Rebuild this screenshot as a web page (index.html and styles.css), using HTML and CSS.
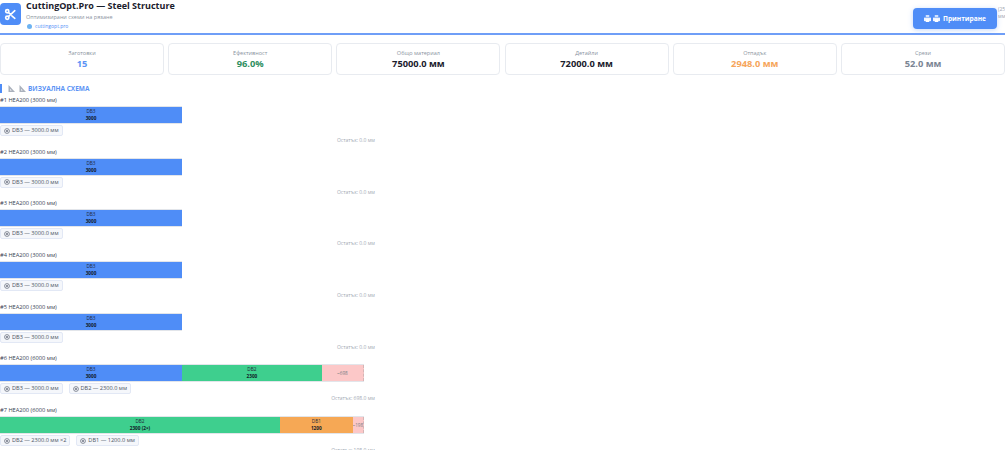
FILE: index.html
```html
<!DOCTYPE html>
<html lang="bg">
<head>
<meta charset="utf-8">
<title>CuttingOpt.Pro</title>
<link rel="stylesheet" href="styles.css">
</head>
<body>
<svg class="defs" width="0" height="0" aria-hidden="true">
  <symbol id="printer" viewBox="0 0 8 8"><path d="M2 0h4v2.5H2z" fill="#cfe0fd"/><path d="M0 3h8v4H0z" fill="#eef4ff"/><path d="M2 5h4v3H2z" fill="#fff"/></symbol>
  <symbol id="ruler" viewBox="0 0 7 7"><path d="M.5 0v7H7z" fill="#aab1bc"/><path d="M2 4v1.6h1.8z" fill="#fff"/></symbol>
  <symbol id="gear" viewBox="0 0 6 6"><circle cx="3" cy="3" r="2.4" fill="none" stroke="#6b7280" stroke-width=".8"/><circle cx="3" cy="3" r="1" fill="#6b7280"/></symbol>
</svg>
<header class="header">
  <div class="brand">
    <div class="logo">
      <svg width="13" height="13" viewBox="0 0 24 24" fill="none" stroke="#fff" stroke-width="3" stroke-linecap="round"><circle cx="6" cy="6" r="3"/><circle cx="6" cy="18" r="3"/><path d="M20 5 8.1 15.9M14.5 14.5 20 19M8.1 8.1 12 12"/></svg>
    </div>
    <div class="brand-text">
      <div class="title">CuttingOpt.Pro — Steel Structure</div>
      <div class="subtitle">Оптимизирани схеми на рязане</div>
      <div class="site"><span class="globe"></span>cuttingopt.pro</div>
    </div>
  </div>
  <div class="actions">
    <button class="print"><svg class="pi"><use href="#printer"/></svg><svg class="pi"><use href="#printer"/></svg>Принтиране</button>
    <div class="meta">(25<br>мм</div>
  </div>
</header>
<section class="stats">
  <div class="card"><div class="lab">Заготовки</div><div class="val blue">15</div></div>
  <div class="card"><div class="lab">Ефективност</div><div class="val green">96.0%</div></div>
  <div class="card"><div class="lab">Общо материал</div><div class="val">75000.0 мм</div></div>
  <div class="card"><div class="lab">Детайли</div><div class="val">72000.0 мм</div></div>
  <div class="card"><div class="lab">Отпадък</div><div class="val orange">2948.0 мм</div></div>
  <div class="card"><div class="lab">Срези</div><div class="val grey">52.0 мм</div></div>
</section>
<h2 class="section"><svg class="tri"><use href="#ruler"/></svg><svg class="tri"><use href="#ruler"/></svg>ВИЗУАЛНА СХЕМА</h2>
<main class="list">
  <article class="row"><div class="name">#1 HEA200 (3000 мм)</div><div class="bar half"><div class="seg db3 w-full">DB3<b>3000</b></div></div><div class="chips"><span class="chip"><svg class="gear"><use href="#gear"/></svg>DB3 — 3000.0 мм</span></div><div class="rest">Остатък: 0.0 мм</div></article>
  <article class="row"><div class="name">#2 HEA200 (3000 мм)</div><div class="bar half"><div class="seg db3 w-full">DB3<b>3000</b></div></div><div class="chips"><span class="chip"><svg class="gear"><use href="#gear"/></svg>DB3 — 3000.0 мм</span></div><div class="rest">Остатък: 0.0 мм</div></article>
  <article class="row"><div class="name">#3 HEA200 (3000 мм)</div><div class="bar half"><div class="seg db3 w-full">DB3<b>3000</b></div></div><div class="chips"><span class="chip"><svg class="gear"><use href="#gear"/></svg>DB3 — 3000.0 мм</span></div><div class="rest">Остатък: 0.0 мм</div></article>
  <article class="row"><div class="name">#4 HEA200 (3000 мм)</div><div class="bar half"><div class="seg db3 w-full">DB3<b>3000</b></div></div><div class="chips"><span class="chip"><svg class="gear"><use href="#gear"/></svg>DB3 — 3000.0 мм</span></div><div class="rest">Остатък: 0.0 мм</div></article>
  <article class="row"><div class="name">#5 HEA200 (3000 мм)</div><div class="bar half"><div class="seg db3 w-full">DB3<b>3000</b></div></div><div class="chips"><span class="chip"><svg class="gear"><use href="#gear"/></svg>DB3 — 3000.0 мм</span></div><div class="rest">Остатък: 0.0 мм</div></article>
  <article class="row"><div class="name">#6 HEA200 (6000 мм)</div><div class="bar"><div class="seg db3 w-50">DB3<b>3000</b></div><div class="seg db2 w-38">DB2<b>2300</b></div><div class="seg waste">~698</div></div><div class="chips"><span class="chip"><svg class="gear"><use href="#gear"/></svg>DB3 — 3000.0 мм</span><span class="chip"><svg class="gear"><use href="#gear"/></svg>DB2 — 2300.0 мм</span></div><div class="rest">Остатък: 698.0 мм</div></article>
  <article class="row"><div class="name">#7 HEA200 (6000 мм)</div><div class="bar"><div class="seg db2 w-77">DB2<b>2300 (2×)</b></div><div class="seg db1 w-20">DB1<b>1200</b></div><div class="seg waste">~198</div></div><div class="chips"><span class="chip"><svg class="gear"><use href="#gear"/></svg>DB2 — 2300.0 мм ×2</span><span class="chip"><svg class="gear"><use href="#gear"/></svg>DB1 — 1200.0 мм</span></div><div class="rest last">Остатък: 198.0 мм</div></article>
</main>
</body>
</html>
```
FILE: styles.css
```css
* { box-sizing: border-box; }
html, body { margin: 0; height: 450px; overflow: hidden; background: #fff; }
body { font-family: "Open Sans", sans-serif; color: #1f2937; }
.defs { position: absolute; }
.header { height: 35px; display: flex; justify-content: space-between; border-bottom: 2px solid #6f9ef7; }
.brand { display: flex; gap: 5px; align-items: flex-start; }
.logo { width: 21px; height: 22px; margin-top: 3px; border-radius: 4px; background: #4f8df7; display: flex; align-items: center; justify-content: center; }
.title { font-size: 9px; line-height: 12px; font-weight: 700; color: #1a202c; }
.subtitle { font-size: 5.5px; line-height: 8px; margin-top: 1px; color: #8a93a0; }
.site { font-size: 5px; line-height: 8px; margin-top: 1px; padding-left: 1px; color: #4f8df7; display: flex; align-items: center; gap: 3px; }
.globe { width: 5px; height: 5px; border-radius: 50%; background: #6db3f2; }
.actions { display: flex; align-items: flex-start; gap: 1px; }
.print { margin-top: 8px; width: 84px; height: 21px; padding: 0; border: 0; border-radius: 4px; background: #4f8df7; box-shadow: 0 1px 5px rgba(79,141,247,.35); color: #fff; font: 700 6.6px "Open Sans", sans-serif; display: flex; align-items: center; justify-content: center; gap: 2px; }
.pi { width: 7px; height: 7px; }
.pi + .pi { margin-right: 1px; }
.meta { width: 7px; margin-top: 6px; font-size: 5px; line-height: 7px; color: #9aa3af; overflow: hidden; white-space: nowrap; }
.stats { display: grid; grid-template-columns: repeat(6, 1fr); gap: 4.2px; margin-top: 8px; }
.card { height: 32px; border: 1px solid #e8ebf0; border-radius: 4px; text-align: center; padding-top: 5px; }
.lab { font-size: 5.5px; line-height: 8px; color: #8a93a0; }
.val { font-size: 9.3px; line-height: 14px; font-weight: 700; color: #1a202c; }
.blue { color: #5b93f5; } .green { color: #2f8f5f; } .orange { color: #f6a55a; } .grey { color: #7a8594; }
.section { height: 9px; margin: 9px 0 0; border-left: 2px solid #4f8df7; font-size: 6.5px; line-height: 9px; font-weight: 700; color: #5b93f5; display: flex; align-items: center; padding-left: 6px; gap: 4px; }
.tri { width: 7px; height: 7px; }
.tri + .tri { margin-right: -2px; }
.list { width: 375px; margin-top: 3px; }
.row { height: 51.7px; }
.name { font-size: 5.7px; line-height: 8px; margin-bottom: 2px; color: #374151; }
.bar { width: 364px; height: 18px; display: flex; background: #f1f3f5; border: 1px solid #e2e5ea; border-width: 1px 0; }
.bar.half { width: 182px; }
.seg { height: 100%; font-size: 4.7px; line-height: 7px; color: #1f2937; display: flex; flex-direction: column; align-items: center; justify-content: center; }
.seg b { font-weight: 700; color: #111827; }
.w-full { width: 100%; } .w-50 { width: 50%; } .w-38 { width: 38.4%; } .w-77 { width: 76.9%; } .w-20 { width: 20%; }
.db3 { background: #4f8df7; } .db2 { background: #3ecf8e; } .db1 { background: #f6a855; }
.waste { flex: 1; min-width: 0; overflow: hidden; white-space: nowrap; background: #fcc8c8; color: #7a7f87; border-right: 1px dashed #d5b5b5; }
.chips { display: flex; gap: 6px; margin-top: 1px; }
.chip { height: 11px; padding: 0 3px; border: 1px solid #e2e8f5; border-radius: 2px; background: #f5f7fb; font-size: 5.6px; line-height: 9px; color: #4b5563; display: flex; align-items: center; gap: 2px; }
.gear { width: 6px; height: 6px; }
.rest { font-size: 5px; line-height: 8px; color: #a3aab5; text-align: right; }
.last { height: 6px; overflow: hidden; }
```
